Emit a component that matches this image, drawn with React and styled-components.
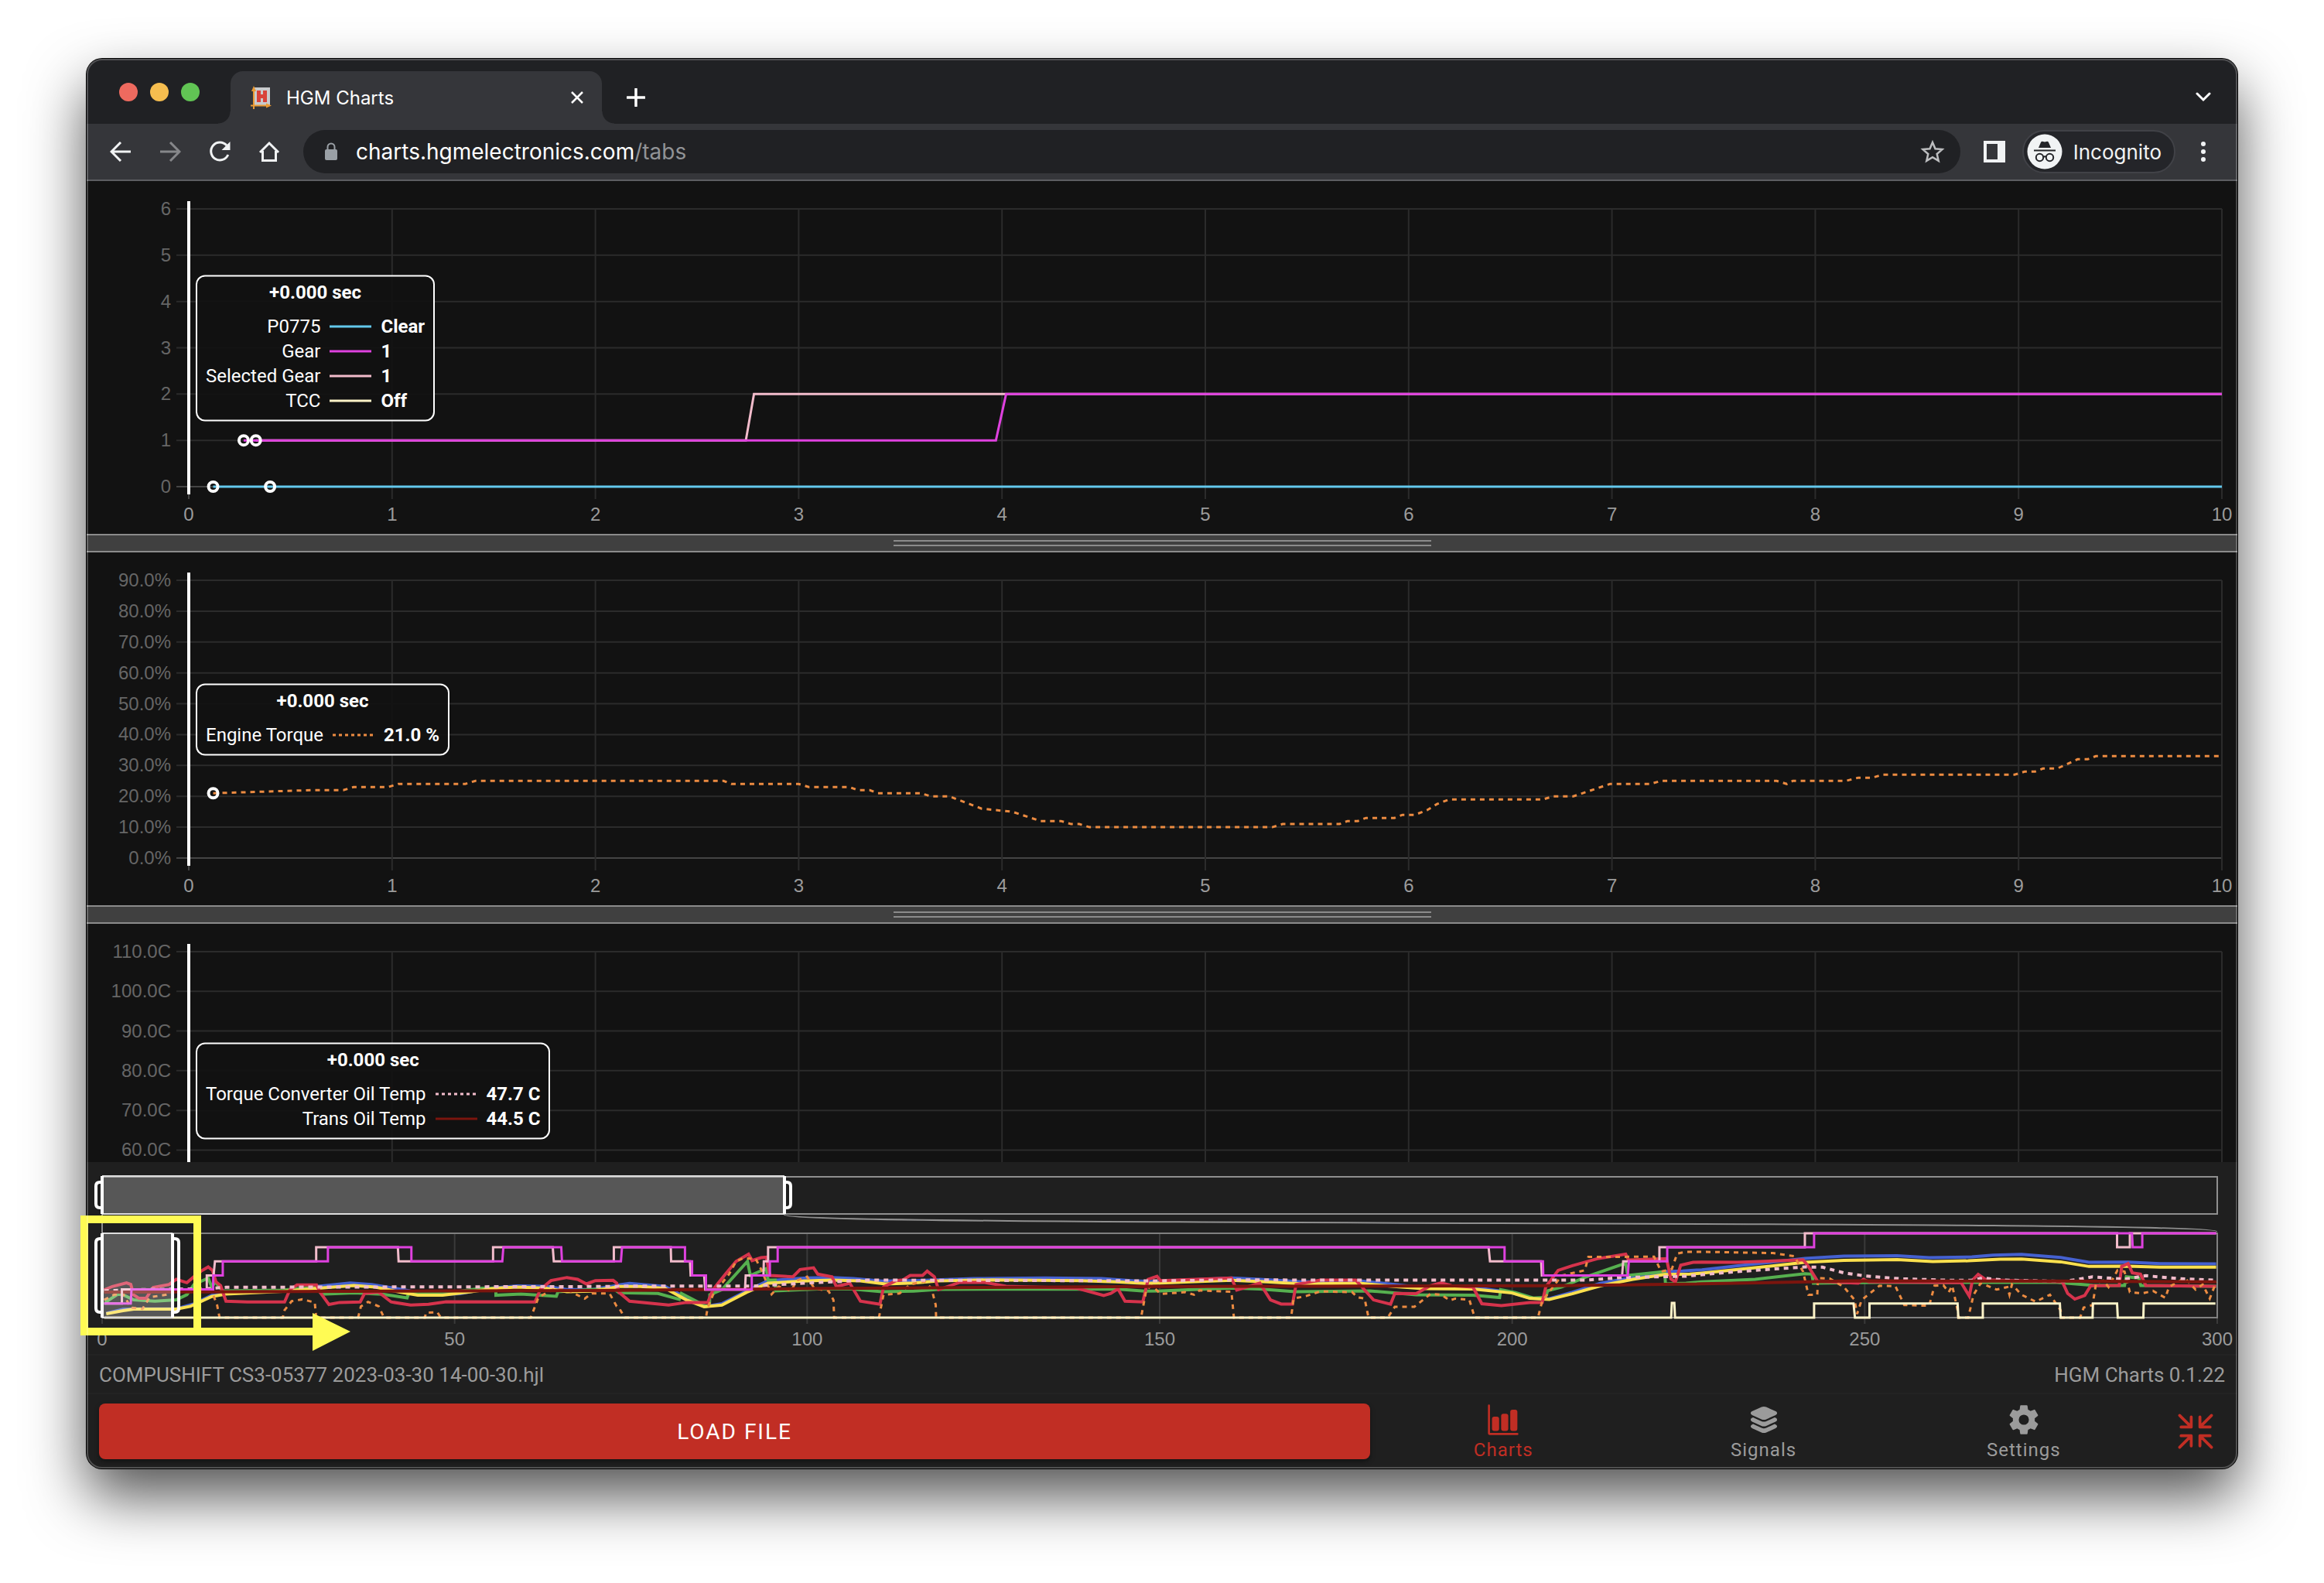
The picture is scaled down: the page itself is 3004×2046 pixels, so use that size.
/**
*
* HGM Charts
*
*/

import React from 'react';
import styled, { createGlobalStyle } from 'styled-components';
import { IoBarChart, IoContract, IoLayers, IoSettingsSharp } from 'react-icons/io5';

const colors = {
    cyan: '#63c8ec',
    magenta: '#df41df',
    pink: '#f2bccb',
    cream: '#fdf3c8',
    orange: '#ec8b41',
    maroon: '#7b150e',
    red: '#d6334c',
    green: '#56b04f',
    blue: '#4561d0',
    yellow: '#fce04e',
    brand: '#c12e24',
    muted: '#9b9b9b',
};

/* Data */

const gearSeries = [
    { color: colors.cyan, points: [[0.12, 0], [10, 0]] },
    { color: colors.pink, points: [[0.33, 1], [2.74, 1], [2.78, 2], [10, 2]] },
    { color: colors.magenta, points: [[0.27, 1], [3.97, 1], [4.02, 2], [10, 2]] },
];

const torqueSeries = [
    {
        color: colors.orange,
        dashed: true,
        points: [
            [0.12, 21], [0.6, 22], [0.76, 22], [0.81, 23], [0.98, 23], [1.03, 24], [1.36, 24], [1.41, 25],
            [2.63, 25], [2.67, 24], [3, 24], [3.05, 23], [3.25, 23], [3.29, 22], [3.35, 22], [3.39, 21],
            [3.6, 21], [3.65, 20], [3.74, 20], [3.9, 16], [4.05, 15], [4.19, 12], [4.29, 12], [4.34, 11],
            [4.38, 11], [4.43, 10], [5.33, 10], [5.38, 11], [5.66, 11], [5.7, 12], [5.75, 12], [5.79, 13],
            [5.93, 13], [5.97, 14], [6.03, 14], [6.09, 15.5], [6.14, 17.5], [6.2, 19], [6.66, 19], [6.71, 20],
            [6.81, 20], [6.99, 24], [7.19, 24], [7.24, 25], [7.81, 25], [7.86, 24], [7.89, 25], [8.15, 25],
            [8.21, 26], [8.28, 26], [8.33, 27], [8.98, 27], [9.03, 28], [9.08, 28], [9.12, 29], [9.19, 29],
            [9.24, 30.5], [9.29, 32], [9.34, 32], [9.38, 33], [10, 33],
        ],
    },
];

const TICKS_PER_SEC = 19.85;
const RAW_ZERO = 609;
const RAW_SPAN = 328;
const PAGE_STARTS = [-4.6, 73.3, 150.1, 226.9];

const overviewSeries = [
    {
        color: colors.blue,
        bold: true,
        pages: [
            '103,592 150,577 200,575 300,575 350,555 400,522 470,512 620,503 700,487 790,474 850,480 930,498 1020,520 1100,516 1180,495 1260,486 1340,487 1400,500 1470,500 1540,484',
            '0,482 30,476 130,488 200,540 245,565 290,555 360,505 420,465 529,455 600,453 660,457 740,467 830,465 1000,457 1200,455 1360,457 1450,466 1500,468',
            '0,468 200,455 280,460 400,470 560,466 660,480 760,495 900,495 990,512 1040,533 1090,537 1160,510 1240,475 1330,453 1420,430 1470,428 1510,424',
            '0,423 150,400 290,379 400,370 550,368 640,376 760,373 820,366 900,363 1010,375 1090,394 1200,393 1290,399 1448,400',
        ],
    },
    {
        color: colors.green,
        bold: true,
        pages: [
            '100,550 135,518 150,520 180,540 240,545 300,540 330,520 350,480 390,455 400,490 410,470 430,505 600,502 690,490 710,518 800,513 880,518 950,532 955,512 1090,508 1160,495 1200,495 1200,522 1270,517 1370,526 1375,508 1530,495',
            '0,512 110,515 170,538 176,515 245,565 255,560 256,520 290,500 362,390 370,445 415,418 420,463 440,463 441,505 560,498 650,497 740,508 830,506 900,499 1400,498 1480,506',
            '0,505 200,494 280,498 380,508 590,505 720,520 880,522 955,531 958,500 1000,512 1050,533 1085,530 1090,505 1130,490 1200,450 1310,397 1316,445 1420,430 1422,478 1480,475',
            '0,470 150,460 290,438 310,440 314,475 500,472 1000,472 1100,483 1190,484 1195,450 1230,455 1236,484 1448,487',
        ],
    },
    {
        color: colors.yellow,
        bold: true,
        pages: [
            '103,594 150,582 180,576 300,576 340,565 400,527 440,517 600,507 700,495 800,484 860,490 930,510 980,522 1050,522 1130,508 1200,495 1260,490 1340,495 1400,508 1470,506 1540,490',
            '0,488 60,488 130,495 190,540 240,567 290,560 360,510 420,475 529,466 600,463 680,466 750,478 830,474 900,466 1050,462 1300,465 1400,470 1480,476',
            '0,474 200,464 300,470 400,478 560,475 650,487 740,496 880,498 990,513 1040,534 1095,538 1160,516 1240,485 1330,460 1420,441 1490,440',
            '0,436 150,415 290,394 400,386 550,383 650,391 750,388 840,382 900,381 1010,392 1090,410 1200,409 1290,413 1448,413',
        ],
    },
    {
        color: colors.red,
        bold: true,
        pages: [
            '97,502 120,488 160,474 172,480 180,520 195,534 215,534 235,492 280,480 300,460 330,473 350,450 370,428 390,412 402,425 412,470 425,485 440,545 500,548 605,548 620,500 640,482 695,482 705,510 730,558 760,550 818,548 830,515 870,510 905,548 960,560 1010,557 1060,547 1310,548 1325,500 1355,465 1400,453 1430,460 1455,478 1480,465 1530,464 1540,475',
            '0,510 30,545 140,560 190,550 250,550 265,500 300,440 330,390 365,362 375,387 400,376 415,374 425,445 490,450 510,422 548,415 560,440 600,450 612,488 650,475 680,545 735,557 745,490 780,465 800,462 820,445 855,445 868,428 888,450 900,500 960,472 1030,472 1090,487 1290,495 1365,523 1385,515 1405,497 1425,545 1475,548 1490,460 1515,448',
            '0,465 100,460 200,455 215,502 280,475 310,540 340,556 372,556 382,480 450,463 550,463 600,540 648,557 660,515 720,516 760,485 790,474 820,485 880,490 905,555 960,562 1040,550 1075,550 1085,490 1120,425 1160,407 1230,380 1310,362 1318,385 1425,380 1437,458 1450,470 1465,405 1500,394',
            '0,393 100,394 285,384 300,410 326,468 440,475 455,460 470,470 730,473 753,525 762,463 778,441 800,462 1015,470 1030,515 1050,537 1078,523 1095,485 1175,484 1182,410 1200,399 1212,435 1235,440 1250,484 1448,487',
        ],
    },
    {
        color: colors.orange,
        dashed: true,
        pages: [
            '97,540 125,520 150,515 172,570 205,575 225,530 270,520 300,505 400,505 415,560 422,609 600,609 605,580 625,545 655,538 690,550 694,609 812,609 820,565 840,548 870,565 885,609 1000,609 1003,590 1035,588 1045,609 1298,609 1320,530 1360,500 1400,500 1420,515 1450,535 1470,515 1520,515 1540,565',
            '0,570 16,609 245,609 250,570 265,520 310,440 330,390 350,378 385,380 400,420 430,518 450,488 485,505 500,465 530,450 550,495 590,505 604,540 606,609 732,609 745,520 790,515 820,480 860,468 880,495 892,560 893,609 1470,609 1485,500 1500,485 1520,510',
            '0,517 70,510 95,520 110,503 200,508 207,609 368,609 375,535 410,525 450,507 540,510 555,530 575,535 586,609 640,609 660,567 715,567 760,517 790,520 815,542 830,535 870,540 885,609 1063,609 1075,545 1130,445 1195,425 1205,373 1390,372 1410,430 1440,420 1455,360 1480,353',
            '0,353 200,358 260,370 285,430 300,520 325,520 327,455 360,457 400,490 430,540 437,595 450,540 500,485 545,487 570,560 640,563 655,485 680,483 695,510 705,485 720,580 722,609 750,609 765,520 785,475 830,500 860,490 866,520 873,480 900,520 940,547 980,520 1010,580 1012,609 1065,609 1075,570 1100,560 1110,475 1130,465 1145,490 1170,425 1190,430 1205,510 1240,515 1270,505 1305,532 1315,490 1360,455 1390,500 1410,480 1430,535 1448,470',
        ],
    },
    {
        color: colors.pink,
        bold: true,
        dashed: true,
        pages: [
            '97,505 200,500 380,497 440,491 1540,488',
            '0,486 380,486 520,475 600,470 700,463 1500,466',
            '0,466 230,462 400,463 1200,463 1300,453 1480,448',
            '0,442 100,430 200,420 290,412 340,413 400,435 460,447 560,458 700,464 760,464 790,455 850,463 1020,468 1060,460 1100,450 1190,460 1250,446 1340,457 1448,464',
        ],
    },
    {
        color: colors.maroon,
        bold: true,
        pages: [
            '97,510 1540,503',
            '0,503 529,496 1500,488',
            '0,488 1100,485 1510,478',
            '0,477 300,470 420,466 1000,467 1448,470',
        ],
    },
    {
        color: colors.pink,
        pages: [
            '97,554 147,554 147,499 386,499 386,445 405,445 409,390 694,390 694,335 924,335 926,390 1192,390 1192,335 1360,335 1363,390 1532,390 1532,335',
            '146,335 147,390 200,390 202,445 240,445 243,500 355,500 357,445 407,445 408,390 420,390 420,335',
            '924,335 928,390 1072,390 1074,445 1300,445 1303,390 1405,390 1405,335',
            '290,335 290,281 1169,281 1169,335 1205,335 1205,281 1448,281',
        ],
    },
    {
        color: colors.magenta,
        pages: [
            '97,554 172,554 174,499 404,499 404,445 431,445 431,390 727,390 727,335 962,335 962,390 1218,390 1221,335 1384,335 1386,390 1552,390 1555,335',
            '186,335 186,390 206,390 206,445 245,445 245,500 374,500 374,445 425,445 425,390 447,390 447,335',
            '969,335 969,390 1077,390 1078,445 1316,445 1319,390 1427,390 1427,335',
            '316,335 316,281 1211,281 1213,335 1240,335 1240,281 1448,281',
        ],
    },
    {
        color: colors.cream,
        pages: [
            '97,609 1540,609',
            '0,609 1500,609',
            '0,609 1438,609 1440,552 1447,552 1449,609',
            '316,609 316,554 427,554 431,609 472,609 472,554 720,554 722,609 791,609 791,554 1008,554 1010,609 1100,609 1101,554 1169,554 1171,609 1243,609 1244,554 1446,554',
        ],
    },
];

function decodePages(pages) {
    return pages.flatMap((page, index) => page.split(' ').map((pair) => {
        const [tick, raw] = pair.split(',').map(Number);
        return [PAGE_STARTS[index] + tick / TICKS_PER_SEC, (RAW_ZERO - raw) / RAW_SPAN];
    }));
}

const charts = [
    {
        id: 'gear',
        min: 0,
        max: 6,
        ticks: ['6', '5', '4', '3', '2', '1', '0'],
        series: gearSeries,
        markers: [[0.12, 0], [0.4, 0], [0.27, 1], [0.33, 1]],
        rows: [
            { label: 'P0775', value: 'Clear', color: colors.cyan },
            { label: 'Gear', value: '1', color: colors.magenta },
            { label: 'Selected Gear', value: '1', color: colors.pink },
            { label: 'TCC', value: 'Off', color: colors.cream },
        ],
    },
    {
        id: 'torque',
        min: 0,
        max: 90,
        ticks: ['90.0%', '80.0%', '70.0%', '60.0%', '50.0%', '40.0%', '30.0%', '20.0%', '10.0%', '0.0%'],
        series: torqueSeries,
        markers: [[0.12, 21]],
        rows: [{ label: 'Engine Torque', value: '21.0 %', color: colors.orange, dashed: true }],
    },
    {
        // The lower end of this panel is scrolled out of view, so it carries no time axis
        id: 'temp',
        min: 40,
        max: 110,
        ticks: ['110.0C', '100.0C', '90.0C', '80.0C', '70.0C', '60.0C', null, null],
        hideTime: true,
        series: [],
        markers: [],
        rows: [
            { label: 'Torque Converter Oil Temp', value: '47.7 C', color: colors.pink, dashed: true },
            { label: 'Trans Oil Temp', value: '44.5 C', color: colors.maroon },
        ],
    },
];

/* Styles */

const GlobalStyle = createGlobalStyle`
    * {
        box-sizing: border-box;
    }

    body {
        margin: 0;
        background: #fff;
        font-family: Roboto, sans-serif;
    }

    button,
    input {
        margin: 0;
        padding: 0;
        border: 0;
        background: none;
        color: inherit;
        font: inherit;
    }
`;

const Desktop = styled.div`
    display: flex;
    height: 100vh;
    padding: 76px 112px 148px;
`;

const Window = styled.div`
    position: relative;
    display: flex;
    flex: 1;
    flex-direction: column;
    min-width: 0;
    border-radius: 20px;
    background: #1f1f1f;
    box-shadow: 0 0 0 1px #000, 0 36px 76px rgba(0, 0, 0, 0.68);

    &::after {
        position: absolute;
        inset: 0;
        border: 2px solid rgba(255, 255, 255, 0.22);
        border-radius: 20px;
        pointer-events: none;
        content: '';
    }
`;

const TabStrip = styled.div`
    display: flex;
    align-items: flex-end;
    height: 84px;
    padding-left: 42px;
    border-radius: 20px 20px 0 0;
    background: #202124;
    color: #fff;
    font-family: Inter, sans-serif;
`;

const TrafficLights = styled.div`
    display: flex;
    gap: 16px;
    width: 144px;
    padding-bottom: 29px;
`;

const Light = styled.button`
    width: 24px;
    height: 24px;
    border-radius: 50%;
    background: ${(props) => props.$color};
`;

const BrowserTab = styled.div`
    position: relative;
    display: flex;
    align-items: center;
    width: 480px;
    height: 68px;
    padding: 0 20px 0 26px;
    border-radius: 16px 16px 0 0;
    background: #35363a;
    font-size: 24px;

    &::before,
    &::after {
        position: absolute;
        bottom: 0;
        width: 16px;
        height: 16px;
        content: '';
    }

    &::before {
        right: 100%;
        background: radial-gradient(circle at 0 0, transparent 15px, #35363a 16px);
    }

    &::after {
        left: 100%;
        background: radial-gradient(circle at 100% 0, transparent 15px, #35363a 16px);
    }
`;

const TabTitle = styled.span`
    flex: 1;
    padding-left: 18px;
`;

const StripButton = styled.button`
    display: grid;
    place-items: center;
    width: ${(props) => (props.$wide ? '88px' : '24px')};
    height: ${(props) => (props.$wide ? '68px' : '24px')};
    margin-left: ${(props) => (props.$end ? 'auto' : '0')};
`;

const Toolbar = styled.div`
    display: flex;
    align-items: center;
    height: 74px;
    padding: 0 12px;
    border-bottom: 2px solid #5c5d61;
    background: #35363a;
    color: #f1f3f4;
    font-family: Inter, sans-serif;
`;

const ToolButton = styled.button`
    display: grid;
    place-items: center;
    width: 64px;
    height: 56px;
    color: ${(props) => (props.$disabled ? '#86878a' : '#f1f3f4')};
`;

const AddressBar = styled.div`
    display: flex;
    flex: 1;
    align-items: center;
    height: 56px;
    margin: 0 12px;
    padding: 0 20px 0 24px;
    border-radius: 28px;
    background: #202124;
    color: #9aa0a6;
    font-size: 28px;
`;

const AddressInput = styled.input`
    field-sizing: content;
    margin-left: 20px;
    color: #fff;
    outline: none;
`;

const AddressPath = styled.span`
    flex: 1;
    color: #919396;
`;

const Profile = styled.button`
    display: flex;
    align-items: center;
    gap: 14px;
    height: 56px;
    margin: 0 4px;
    padding: 0 16px 0 4px;
    border: 2px solid #414247;
    border-radius: 28px;
    background: #242529;
    font-size: 26px;
`;

const Charts = styled.main`
    flex: 1;
    min-height: 0;
    overflow: hidden;
    background: #121212;
`;

const Panel = styled.section`
    position: relative;
    height: 456px;
    padding: 36px 20px 61px 132px;
`;

const Plot = styled.svg`
    display: block;
    width: 100%;
    height: 100%;
    overflow: visible;
    font-family: 'Liberation Sans', Arial, sans-serif;
    font-size: 24px;
`;

const Tooltip = styled.table`
    position: absolute;
    top: 216px;
    left: 141px;
    padding: 4px 0 9px;
    border: 2px solid #fff;
    border-radius: 12px;
    border-spacing: 0;
    background: rgba(18, 18, 18, 0.95);
    color: #fff;
    font-size: 24px;
    line-height: 32px;
    transform: translateY(-50%);
`;

const TooltipTitle = styled.th`
    padding: 0 11px 12px;
`;

const TooltipLabel = styled.td`
    padding: 0 0 0 11px;
    text-align: right;
`;

const TooltipValue = styled.td`
    padding: 0 11px 0 0;
    font-weight: 700;
`;

const Swatch = styled.div`
    width: 54px;
    margin: 0 11px;
    border-top: 3px solid ${(props) => props.$color};
    ${(props) => props.$dashed && `
        height: 3px;
        border-top: 0;
        background: repeating-linear-gradient(90deg, ${props.$color} 0 4px, transparent 4px 8px);
    `}
`;

const Divider = styled.div`
    display: flex;
    align-items: center;
    justify-content: center;
    height: 24px;
    border: solid #8b8b8b;
    border-width: 2px 0;
    background: #404040;
    cursor: row-resize;
`;

const Grip = styled.div`
    width: 25%;
    height: 8px;
    border: solid #8b8b8b;
    border-width: 2px 0;
`;

const Overview = styled.section`
    height: 250px;
    padding: 18px 26px 0 20px;
    border-bottom: 2px solid #232323;
`;

const Brush = styled.svg`
    display: block;
    width: 100%;
    height: ${(props) => props.$height}px;
    overflow: visible;
    font-family: 'Liberation Sans', Arial, sans-serif;
    font-size: 24px;
`;

const StatusBar = styled.div`
    display: flex;
    align-items: center;
    justify-content: space-between;
    height: 50px;
    padding: 2px 16px 0;
    border-bottom: 2px solid #232323;
    color: ${colors.muted};
    font-size: 26px;
`;

const BottomBar = styled.footer`
    display: flex;
    align-items: center;
    height: 96px;
    padding-left: 16px;
`;

const LoadButton = styled.button`
    flex: 1;
    height: 72px;
    border-radius: 8px;
    background: ${colors.brand};
    box-shadow: 0 3px 6px rgba(0, 0, 0, 0.4);
    color: #fff;
    font-size: 28px;
    letter-spacing: 2px;
`;

const TabBar = styled.nav`
    display: flex;
    width: 36.5%;
    margin-left: 4px;
    padding-top: 4px;
`;

const TabLink = styled.a`
    display: flex;
    flex: 1;
    flex-direction: column;
    align-items: center;
    gap: 2px;
    color: ${(props) => (props.$active ? colors.brand : colors.muted)};
    font-size: 24px;
    letter-spacing: 1px;
    line-height: 32px;
    text-decoration: none;
`;

const ShrinkButton = styled.button`
    display: grid;
    place-items: center;
    width: 108px;
    height: 72px;
    color: ${colors.brand};
`;

// Tutorial highlight drawn over the brush
const Highlight = styled.svg`
    position: absolute;
    bottom: 152px;
    left: -8px;
    width: 350px;
    height: 175px;
    pointer-events: none;
`;

/* Components */

function Trace({ points, min, max, span, color, dashed, bold }) {
    return (
        <svg width="100%" height="100%" viewBox={`0 0 ${span} ${max - min}`} preserveAspectRatio="none" overflow="visible">
            <polyline
                points={points.map(([x, y]) => `${x},${max - y}`).join(' ')}
                fill="none"
                stroke={color}
                strokeWidth={bold ? 4 : 3}
                strokeDasharray={dashed ? '6 6' : undefined}
                vectorEffect="non-scaling-stroke"
            />
        </svg>
    );
}

function ChartTooltip({ rows }) {
    return (
        <Tooltip>
            <thead>
                <tr>
                    <TooltipTitle colSpan="3">+0.000 sec</TooltipTitle>
                </tr>
            </thead>
            <tbody>
                {rows.map((row) => (
                    <tr key={row.label}>
                        <TooltipLabel>{row.label}</TooltipLabel>
                        <td><Swatch $color={row.color} $dashed={row.dashed} /></td>
                        <TooltipValue>{row.value}</TooltipValue>
                    </tr>
                ))}
            </tbody>
        </Tooltip>
    );
}

function Chart({ min, max, ticks, hideTime, series, markers, rows }) {
    const seconds = [0, 1, 2, 3, 4, 5, 6, 7, 8, 9, 10];
    const tickY = (index) => `${(index / (ticks.length - 1)) * 100}%`;

    return (
        <Panel>
            <Plot>
                {ticks.map((tick, index) => (
                    <g key={index}>
                        <line
                            x1="-16"
                            x2="100%"
                            y1={tickY(index)}
                            y2={tickY(index)}
                            stroke={index === ticks.length - 1 ? '#444' : '#2b2b2b'}
                            strokeWidth="2"
                        />
                        {tick && <text x="-23" y={tickY(index)} dy="8" fill="#666" textAnchor="end">{tick}</text>}
                    </g>
                ))}
                {seconds.map((second) => (
                    <svg key={second} x={`${second * 10}%`} overflow="visible">
                        <line y1="0" y2="375" stroke={second ? '#2b2b2b' : '#444'} strokeWidth="2" />
                        {!hideTime && <text y="403" fill={colors.muted} textAnchor="middle">{second}</text>}
                    </svg>
                ))}
                {series.map((trace) => (
                    <Trace key={trace.color} {...trace} min={min} max={max} span={10} />
                ))}
                {markers.map(([x, y]) => (
                    <circle
                        key={`${x}-${y}`}
                        cx={`${x * 10}%`}
                        cy={`${((max - y) / (max - min)) * 100}%`}
                        r="6"
                        fill="none"
                        stroke="#fff"
                        strokeWidth="4"
                    />
                ))}
                <line x1="0" x2="0" y1="-10" y2="369" stroke="#fff" strokeWidth="4" />
            </Plot>
            <ChartTooltip rows={rows} />
        </Panel>
    );
}

function Selection({ width, height, inset }) {
    const bottom = height - inset;

    return (
        <g fill="none" stroke="#fff" strokeWidth="4">
            <rect width={width} height={height} fill="#fff" fillOpacity="0.25" stroke="none" />
            <line x2={width} stroke="#ddd" strokeWidth="2" />
            <line x2={width} y1={height} y2={height} stroke="#ddd" strokeWidth="2" />
            <path d={`M0 0V${height}M0 ${inset}H-3Q-8 ${inset} -8 ${inset + 5}V${bottom - 5}Q-8 ${bottom} -3 ${bottom}H0`} />
            <svg x={width} overflow="visible">
                <path d={`M0 0V${height}M0 ${inset}H3Q8 ${inset} 8 ${inset + 5}V${bottom - 5}Q8 ${bottom} 3 ${bottom}H0`} />
            </svg>
        </g>
    );
}

function OverviewChart() {
    return (
        <Overview>
            <Brush $height={50}>
                <rect y="1" width="100%" height="48" fill="none" stroke="#8f8f8f" strokeWidth="2" />
                <Selection width="32.26%" height={49} inset={8} />
            </Brush>
            <Brush $height={24}>
                <line x1="0" x2="0" y1="0" y2="24" stroke="#8f8f8f" strokeWidth="2" />
                <svg width="100%" height="100%" viewBox="0 0 100 24" preserveAspectRatio="none">
                    <path
                        d="M32.26 0C32.26 16 100 6 100 22"
                        fill="none"
                        stroke="#8f8f8f"
                        strokeWidth="2"
                        vectorEffect="non-scaling-stroke"
                    />
                </svg>
            </Brush>
            <Brush $height={109}>
                {[0, 50, 100, 150, 200, 250, 300].map((second) => (
                    <svg key={second} x={`${second / 3}%`} overflow="visible">
                        <line y2="117" stroke="#3a3a3a" strokeWidth="2" />
                        <text y="145" fill={colors.muted} textAnchor="middle">{second}</text>
                    </svg>
                ))}
                <rect width="100%" height="109" fill="none" stroke="#808080" strokeWidth="2" />
                {overviewSeries.map((trace, index) => (
                    <Trace
                        key={index}
                        points={decodePages(trace.pages)}
                        min={0}
                        max={1}
                        span={300}
                        color={trace.color}
                        dashed={trace.dashed}
                        bold={trace.bold}
                    />
                ))}
                <Selection width="3.33%" height={109} inset={7} />
            </Brush>
        </Overview>
    );
}

function Favicon() {
    return (
        <svg width="28" height="30" viewBox="0 0 28 30">
            <path d="M5 2h20v24H5z" fill="#c9cacc" />
            <path d="M8 6h5v5h3V6h5v15h-5v-5h-3v5H8z" fill="#d9423a" />
            <path d="M4 30V4M0 25.500h24" stroke="#eb9a33" strokeWidth="2" />
            <path d="M4 0l3 7H1zM27 25.500l-7-3v6z" fill="#eb9a33" />
        </svg>
    );
}

function IncognitoIcon() {
    return (
        <svg width="46" height="46" viewBox="0 0 46 46">
            <circle cx="23" cy="23" r="22.500" fill="#f1f3f4" />
            <path d="M15 18l3-7q1-2 3-1 2 .8 4 0 2-1 3 1l3 7z" fill="#242529" />
            <path d="M9 21.500h28" stroke="#242529" strokeWidth="2" />
            <g fill="none" stroke="#242529" strokeWidth="2">
                <circle cx="16.500" cy="30.500" r="4.700" />
                <circle cx="29.500" cy="30.500" r="4.700" />
                <path d="M21 30q2-1.500 4 0" />
            </g>
        </svg>
    );
}

function BrowserChrome() {
    return (
        <header>
            <TabStrip>
                <TrafficLights>
                    <Light $color="#ee6a5f" aria-label="Close window" />
                    <Light $color="#f5bd4f" aria-label="Minimize" />
                    <Light $color="#61c454" aria-label="Zoom" />
                </TrafficLights>
                <BrowserTab>
                    <Favicon />
                    <TabTitle>HGM Charts</TabTitle>
                    <StripButton aria-label="Close tab">
                        <svg width="16" height="16" viewBox="0 0 16 16">
                            <path d="M1 1l14 14M15 1L1 15" stroke="#fff" strokeWidth="2.500" />
                        </svg>
                    </StripButton>
                </BrowserTab>
                <StripButton $wide aria-label="New tab">
                    <svg width="24" height="24" viewBox="0 0 24 24">
                        <path d="M12 1v22M1 12h22" stroke="#fff" strokeWidth="3.500" strokeLinecap="round" />
                    </svg>
                </StripButton>
                <StripButton $wide $end aria-label="Search tabs">
                    <svg width="20" height="14" viewBox="0 0 20 14">
                        <path d="M2 2l8 8 8-8" fill="none" stroke="#fff" strokeWidth="3" strokeLinecap="round" />
                    </svg>
                </StripButton>
            </TabStrip>
            <Toolbar>
                <ToolButton aria-label="Back">
                    <svg width="28" height="26" viewBox="0 0 28 26" fill="none" stroke="currentColor" strokeWidth="3">
                        <path d="M27 13H3M14 1L2 13l12 12" />
                    </svg>
                </ToolButton>
                <ToolButton $disabled aria-label="Forward">
                    <svg width="28" height="26" viewBox="0 0 28 26" fill="none" stroke="currentColor" strokeWidth="3">
                        <path d="M1 13h24M14 1l12 12-12 12" />
                    </svg>
                </ToolButton>
                <ToolButton aria-label="Reload">
                    <svg width="28" height="28" viewBox="0 0 28 28" fill="none" stroke="currentColor" strokeWidth="3">
                        <path d="M23 6A11.500 11.500 0 1 0 24.800 18" />
                        <path d="M27.500 1v11h-11z" fill="currentColor" stroke="none" />
                    </svg>
                </ToolButton>
                <ToolButton aria-label="Home">
                    <svg width="28" height="28" viewBox="0 0 28 28" fill="none" stroke="currentColor" strokeWidth="3">
                        <path d="M2 15L14 3l12 12M5.500 13v12.500h17V13" />
                    </svg>
                </ToolButton>
                <AddressBar>
                    <svg width="24" height="24" viewBox="0 0 24 24">
                        <rect x="4" y="9" width="16" height="14" rx="2" fill="#9aa0a6" />
                        <path d="M7.500 10V6a4.500 4.500 0 0 1 9 0v4" fill="none" stroke="#9aa0a6" strokeWidth="2" />
                    </svg>
                    <AddressInput aria-label="Address" defaultValue="charts.hgmelectronics.com" />
                    <AddressPath>/tabs</AddressPath>
                    <svg width="32" height="32" viewBox="0 0 32 32" fill="none" stroke="#bdbec0" strokeWidth="2.500">
                        <path d="M16 4l3.500 8.300 9 .8-6.800 5.900 2 8.800-7.700-4.700-7.700 4.700 2-8.800-6.800-5.900 9-.8z" />
                    </svg>
                </AddressBar>
                <ToolButton aria-label="Side panel">
                    <svg width="28" height="28" viewBox="0 0 28 28">
                        <path d="M0 0h28v28H0zM4 4v20h14V4z" fill="#f1f3f4" fillRule="evenodd" />
                    </svg>
                </ToolButton>
                <Profile>
                    <IncognitoIcon />
                    Incognito
                </Profile>
                <ToolButton aria-label="Menu">
                    <svg width="8" height="28" viewBox="0 0 8 28" fill="#f1f3f4">
                        <circle cx="4" cy="4" r="3" />
                        <circle cx="4" cy="14" r="3" />
                        <circle cx="4" cy="24" r="3" />
                    </svg>
                </ToolButton>
            </Toolbar>
        </header>
    );
}

function App() {
    return (
        <Desktop>
            <GlobalStyle />
            <Window>
                <BrowserChrome />
                <Charts>
                    {charts.map((chart, index) => (
                        <React.Fragment key={chart.id}>
                            {index > 0 && <Divider><Grip /></Divider>}
                            <Chart {...chart} />
                        </React.Fragment>
                    ))}
                </Charts>
                <OverviewChart />
                <StatusBar>
                    <span>COMPUSHIFT CS3-05377 2023-03-30 14-00-30.hjl</span>
                    <span>HGM Charts 0.1.22</span>
                </StatusBar>
                <BottomBar>
                    <LoadButton>LOAD FILE</LoadButton>
                    <TabBar>
                        <TabLink href="#charts" $active>
                            <IoBarChart size={42} />
                            Charts
                        </TabLink>
                        <TabLink href="#signals">
                            <IoLayers size={42} />
                            Signals
                        </TabLink>
                        <TabLink href="#settings">
                            <IoSettingsSharp size={42} />
                            Settings
                        </TabLink>
                    </TabBar>
                    <ShrinkButton aria-label="Exit full screen">
                        <IoContract size={60} />
                    </ShrinkButton>
                </BottomBar>
                <Highlight viewBox="0 0 350 175">
                    <path d="M0 0h156v145h144v-19l49 24-49 25v-20H0zM10 10v135h136V10z" fill="#fffb54" fillRule="evenodd" />
                </Highlight>
            </Window>
        </Desktop>
    );
}

export default App;
